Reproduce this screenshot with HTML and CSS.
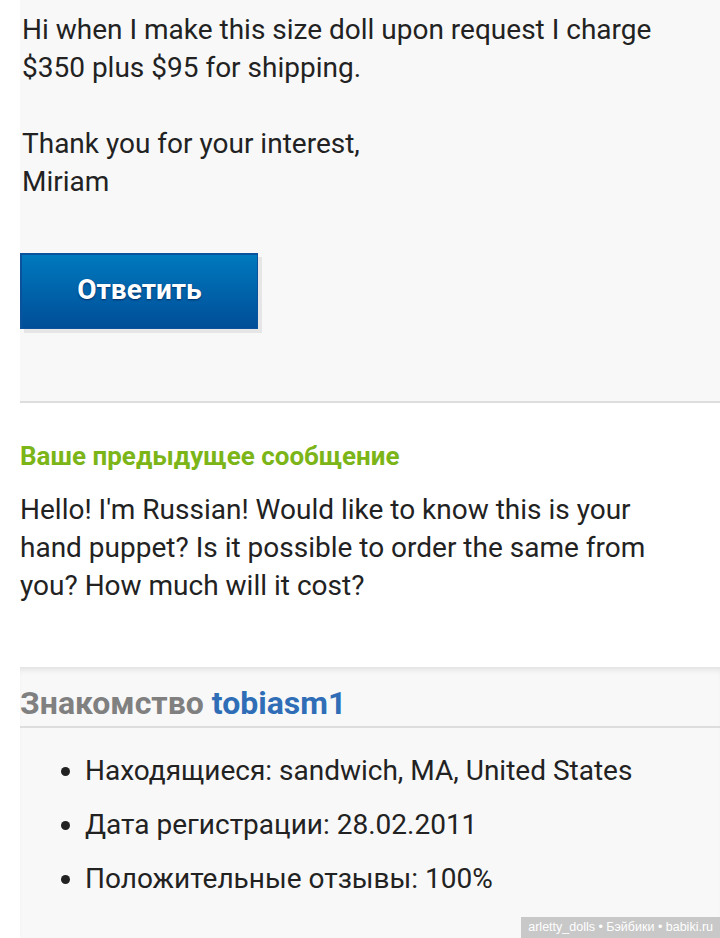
FILE: index.html
```html
<!DOCTYPE html>
<html lang="ru">
<head>
<meta charset="utf-8">
<link rel="stylesheet" href="styles.css">
</head>
<body>
<div class="page">
  <section class="reply">
    <p class="reply-text">Hi when I make this size doll upon request I charge<br>$350 plus $95 for shipping.<br><br>Thank you for your interest,<br>Miriam</p>
    <div class="btn-wrap"><button class="btn">Ответить</button></div>
  </section>
  <section class="prev">
    <h2 class="prev-title">Ваше предыдущее сообщение</h2>
    <p class="prev-text">Hello! I'm Russian! Would like to know this is your hand puppet? Is it possible to order the same from you? How much will it cost?</p>
  </section>
  <section class="about">
    <h2 class="about-title">Знакомство <span class="user">tobiasm1</span></h2>
    <ul class="facts">
      <li>Находящиеся: sandwich, MA, United States</li>
      <li>Дата регистрации: 28.02.2011</li>
      <li>Положительные отзывы: 100%</li>
    </ul>
    <div class="watermark">arletty_dolls • Бэйбики • babiki.ru</div>
  </section>
</div>
</body>
</html>
```
FILE: styles.css
```css
html, body {
  margin: 0;
  padding: 0;
  background: #ffffff;
}
body {
  font-family: Roboto, "Noto Sans", sans-serif;
  color: #222222;
  width: 720px;
  height: 938px;
  overflow: hidden;
}
.page {
  margin-left: 20px;
}
.reply {
  background: #f8f8f8;
  border-bottom: 2px solid #dddddd;
  padding: 0 0 0 2px;
  height: 403px;
  box-sizing: border-box;
}
.reply-text {
  margin: 0;
  padding-top: 11px;
  font-size: 28px;
  line-height: 38px;
}
.btn-wrap {
  margin-top: 52px;
  margin-left: -2px;
}
.btn {
  width: 238px;
  height: 76px;
  border: 1px solid #0a539c;
  border-left-width: 2px;
  border-top-width: 2px;
  background: linear-gradient(#0079bd, #004e98);
  color: #ffffff;
  font-family: Roboto, "Noto Sans", sans-serif;
  font-weight: 700;
  font-size: 28px;
  text-shadow: 0 1px 2px rgba(0, 30, 80, 0.8);
  box-shadow: 4px 4px 0 #e6e6e6;
  padding: 0 0 4px 0;
}
.prev {
  background: #ffffff;
  height: 264px;
  box-sizing: border-box;
  padding: 38px 30px 0 0;
}
.prev-title {
  margin: 0;
  font-size: 26px;
  line-height: 30px;
  font-weight: 700;
  color: #7cb518;
}
.prev-text {
  margin: 20px 0 0 0;
  font-size: 28px;
  line-height: 38px;
}
.about {
  position: relative;
  background: #f8f8f8;
  box-shadow: inset 0 6px 6px -4px #dcdcdc;
  height: 271px;
}
.about-title {
  margin: 0;
  padding-top: 15px;
  height: 44px;
  border-bottom: 2px solid #dddddd;
  font-size: 32px;
  line-height: 42px;
  font-weight: 700;
  color: #808080;
}
.user {
  color: #2f6eb7;
}
.facts {
  margin: 0;
  padding: 24px 0 0 65px;
  font-size: 28px;
  line-height: 38px;
}
.facts li {
  margin-bottom: 16px;
}
.watermark {
  position: absolute;
  right: 0;
  bottom: 0;
  background: #c8c8c8;
  color: #ffffff;
  font-family: "Liberation Sans", Arial, sans-serif;
  font-size: 12.5px;
  line-height: 21px;
  padding: 0 7px;
}
```
